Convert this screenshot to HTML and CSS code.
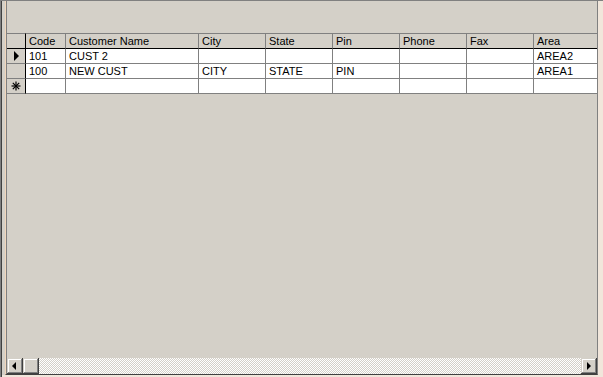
FILE: index.html
```html
<!DOCTYPE html>
<html>
<head>
<meta charset="utf-8">
<link rel="stylesheet" href="styles.css">
</head>
<body>
<div class="window">
  <div class="grid">
    <div class="caption"></div>
    <table class="data">
      <colgroup>
        <col class="c-sel"><col class="c-code"><col class="c-name"><col class="c-std"><col class="c-std"><col class="c-std"><col class="c-std"><col class="c-std"><col class="c-std">
      </colgroup>
      <thead>
        <tr>
          <th class="sel"></th><th>Code</th><th>Customer Name</th><th>City</th><th>State</th><th>Pin</th><th>Phone</th><th>Fax</th><th>Area</th>
        </tr>
      </thead>
      <tbody>
        <tr>
          <td class="sel"><svg class="ico" width="18" height="14" viewBox="0 0 18 14"><polygon points="7,2 12,7 7,12" fill="#000"/></svg></td>
          <td>101</td><td>CUST 2</td><td></td><td></td><td></td><td></td><td></td><td>AREA2</td>
        </tr>
        <tr>
          <td class="sel"></td>
          <td>100</td><td>NEW CUST</td><td>CITY</td><td>STATE</td><td>PIN</td><td></td><td></td><td>AREA1</td>
        </tr>
        <tr>
          <td class="sel"><svg class="ico" width="18" height="14" viewBox="0 0 18 14"><g stroke="#000" stroke-width="1.2" transform="translate(4.5 2.5)"><line x1="4.5" y1="0" x2="4.5" y2="9"/><line x1="0" y1="4.5" x2="9" y2="4.5"/><line x1="1.3" y1="1.3" x2="7.7" y2="7.7"/><line x1="7.7" y1="1.3" x2="1.3" y2="7.7"/></g></svg></td>
          <td></td><td></td><td></td><td></td><td></td><td></td><td></td><td></td>
        </tr>
      </tbody>
    </table>
    <div class="filler"></div>
    <div class="hscroll">
      <div class="btn"><svg width="16" height="16" viewBox="0 0 16 16"><polygon points="9,4 5,8 9,12" fill="#000"/></svg></div>
      <div class="btn"></div>
      <div class="track"></div>
      <div class="btn"><svg width="16" height="16" viewBox="0 0 16 16"><polygon points="6,4 10,8 6,12" fill="#000"/></svg></div>
    </div>
  </div>
</div>
</body>
</html>
```
FILE: styles.css
```css
html, body {
  margin: 0;
  padding: 0;
  background: #d4d0c8;
}
.window {
  width: 603px;
  height: 377px;
  box-sizing: border-box;
  padding: 1px 5px 2px 5px;
  background: #d4d0c8;
  box-shadow: inset 0 1px 0 #808080, inset 1px 0 0 #808080, inset 2px 0 0 #404040, inset -5px -2px 0 #f1e6db;
  display: flex;
  font-family: "Liberation Sans", Arial, sans-serif;
  font-size: 11px;
  color: #000;
}
.grid {
  flex: 1;
  display: flex;
  flex-direction: column;
  border-left: 1px solid #f1d6bb;
  border-right: 1px solid #808080;
  border-bottom: 1px solid #404040;
  overflow: hidden;
  min-width: 0;
}
.caption {
  height: 32px;
  flex: none;
  border-left: 1px solid #808080;
}
.data {
  border-collapse: separate;
  border-spacing: 0;
  table-layout: fixed;
  width: 595px;
  flex: none;
  border-left: 1px solid #808080;
}
.c-sel { width: 19px; }
.c-code { width: 40px; }
.c-name { width: 133px; }
.c-std { width: 67px; }
.data th, .data td {
  height: 14px;
  padding: 0 0 0 3px;
  border-right: 1px solid #808080;
  border-bottom: 1px solid #808080;
  text-align: left;
  font-weight: normal;
  white-space: nowrap;
  overflow: hidden;
  line-height: 14px;
  background: #fff;
  color: #000;
  vertical-align: middle;
}
.data th {
  background: #d4d0c8;
  border-top: 1px solid #808080;
  border-bottom-color: #000;
}
.data .sel {
  background: #d4d0c8;
  padding: 0;
  border-right-color: #000;
}
.ico { display: block; }
.filler {
  flex: 1;
  border-left: 1px solid #808080;
}
.hscroll {
  height: 16px;
  flex: none;
  display: flex;
  border-left: 1px solid #808080;
}
.btn {
  width: 16px;
  height: 16px;
  flex: none;
  background: #d4d0c8;
  box-shadow: inset -1px -1px 0 #404040, inset 1px 1px 0 #d4d0c8, inset -2px -2px 0 #808080, inset 2px 2px 0 #ffffff;
}
.btn svg { display: block; }
.track {
  flex: 1;
  background: repeating-conic-gradient(#ffffff 0 25%, #d4d0c8 0 50%) 0 0 / 2px 2px;
}
```
